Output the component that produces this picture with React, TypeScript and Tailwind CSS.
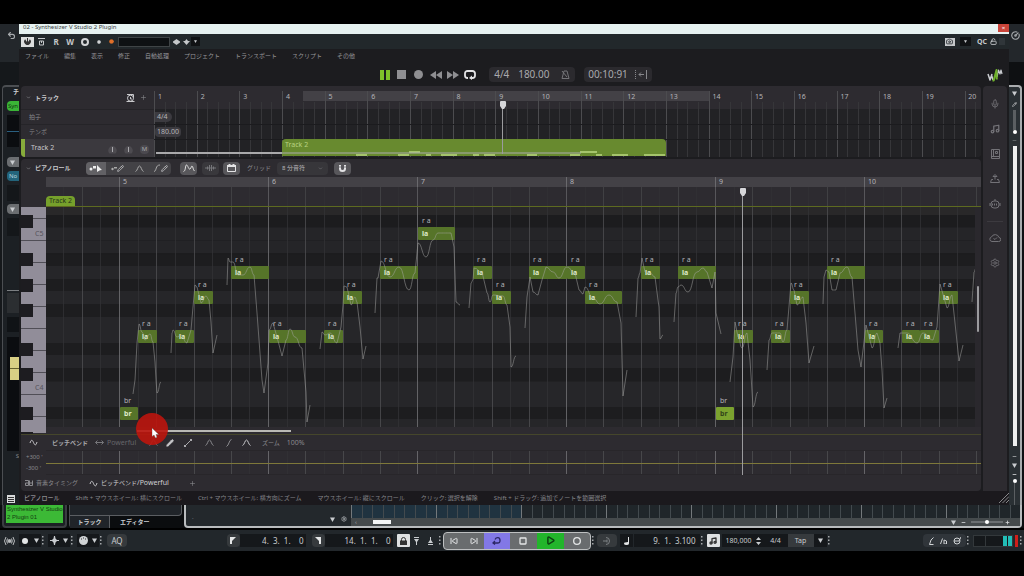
import type { ReactNode } from "react";
import {
  Calendar,
  Camera,
  ChevronDown,
  Circle,
  CircleGauge,
  Mic,
  Minus,
  Music,
  Pencil,
  Play,
  Plus,
  Settings,
  SkipBack,
  SkipForward,
  Square,
  Undo2,
  Unlock,
} from "lucide-react";
import { clsx } from "clsx";

const BAR = 149;
const ROW = 12.8;
const BAR5_X = 74;
const BLACK_KEYS = [1, 3, 6, 8, 10];

type Note = { start: number; len: number; pitch: number; lyric: string; phoneme: string; active?: boolean };

const la = (start: number, len: number, pitch: number): Note => ({ start, len, pitch, lyric: "la", phoneme: "r a" });

// start and length in eighths from bar 5, pitch in semitones from C4
const notes: Note[] = [
  { start: 0, len: 1, pitch: -2, lyric: "br", phoneme: "br" },
  la(1, 1, 4),
  la(3, 1, 4),
  la(4, 1, 7),
  la(6, 2, 9),
  la(8, 2, 4),
  la(11, 1, 4),
  la(12, 1, 7),
  la(14, 2, 9),
  la(16, 2, 12),
  la(19, 1, 9),
  la(20, 1, 7),
  la(22, 2, 9),
  la(24, 1, 9),
  la(25, 2, 7),
  la(28, 1, 9),
  la(30, 2, 9),
  { start: 32, len: 1, pitch: -2, lyric: "br", phoneme: "br", active: true },
  la(33, 1, 4),
  la(35, 1, 4),
  la(36, 1, 7),
  la(38, 2, 9),
  la(40, 1, 4),
  la(42, 1, 4),
  la(43, 1, 4),
  la(44, 1, 7),
];

const pitchCurves: number[][][] = [
  [[87,187],[89,173],[91,136],[93,117],[96,125],[99,133],[104,127],[107,135],[109,155],[110,173],[111,186],[115,175]],
  [[125,146],[126,126],[127,123],[131,130],[135,128],[141,136],[145,123],[147,100],[149,78],[151,80],[155,96],[160,89],[163,93],[165,115],[167,146],[171,128]],
  [[181,78],[182,51],[184,55],[187,55],[192,68],[197,68],[204,60],[208,68],[211,106],[216,173],[218,186],[222,156],[223,123],[227,116],[231,130],[236,149],[240,133],[244,122],[249,130],[256,141],[258,163],[260,185],[261,215],[264,198]],
  [[274,142],[276,125],[279,128],[284,126],[291,136],[295,120],[297,98],[298,79],[301,80],[305,98],[309,90],[311,95],[314,120],[317,152],[320,139]],
  [[329,106],[331,71],[332,71],[335,54],[344,70],[353,60],[363,83],[369,66],[372,36],[380,50],[387,33],[392,26],[405,26],[408,40],[410,95],[414,98]],
  [[423,101],[425,76],[427,73],[428,61],[436,65],[441,86],[444,95],[447,88],[457,89],[461,98],[464,120],[465,160],[470,149]],
  [[479,121],[481,90],[484,70],[487,85],[492,88],[496,73],[500,60],[507,65],[513,71],[521,60],[529,66],[533,83],[537,87],[539,80],[547,91],[554,97],[563,88],[571,95],[575,116],[577,189],[581,163]],
  [[590,110],[592,71],[594,66],[596,51],[599,65],[604,66],[609,70],[612,93],[613,100],[614,132],[617,128]],
  [[628,115],[630,86],[632,80],[635,78],[642,85],[651,65],[657,61],[661,65],[666,81],[669,65],[670,106],[675,127]],
  [[684,175],[687,150],[689,115],[692,130],[696,141],[701,126],[704,153],[707,200],[712,185]],
  [[721,163],[723,133],[726,126],[734,126],[737,135],[741,123],[745,76],[748,83],[751,98],[757,90],[760,116],[763,156],[768,139]],
  [[777,97],[778,70],[780,63],[783,65],[786,83],[790,83],[794,66],[801,60],[806,70],[809,106],[812,143],[815,160],[817,143],[820,118],[826,141],[831,126],[834,136],[836,163],[838,201],[841,191]],
  [[852,141],[854,126],[861,126],[871,136],[877,126],[887,133],[891,120],[894,77],[901,101],[906,88],[909,116],[913,154],[917,138]],
  [[926,95],[928,65],[930,61]],
];

// Horizontal-tangent smoothing keeps the curve from overshooting its points
function smooth(points: number[][]) {
  let d = `M${points[0][0]} ${points[0][1]}`;
  for (let i = 1; i < points.length; i++) {
    const [x, y] = points[i];
    const [px, py] = points[i - 1];
    if (Math.abs(y - py) > 3 * (x - px)) {
      d += `L${x} ${y}`;
    } else {
      const mx = (x + px) / 2;
      d += `C${mx} ${py} ${mx} ${y} ${x} ${y}`;
    }
  }
  return d;
}

const rowTop = (pitch: number) => Math.round(174 - pitch * ROW);
const noteX = (eighth: number) => Math.floor(BAR5_X + (eighth * BAR) / 8);

function BeatGrid({ id, className }: { id: string; className?: string }) {
  return (
    <svg className={clsx("absolute inset-0 h-full w-full", className)} shapeRendering="crispEdges" aria-hidden="true">
      <defs>
        <pattern id={id} x={BAR5_X - 1} y="0" width={BAR} height="40" patternUnits="userSpaceOnUse">
          {[0, 19, 37, 56, 75, 93, 112, 130].map((x, i) => (
            <rect key={x} x={x} width="1" height="40" fill={i === 0 ? "#737376" : i % 2 === 0 ? "#4e4e51" : "#323235"} />
          ))}
        </pattern>
      </defs>
      <rect width="100%" height="100%" fill={`url(#${id})`} />
    </svg>
  );
}

function Tool({ label, className, children }: { label: string; className?: string; children: ReactNode }) {
  return (
    <button type="button" aria-label={label} className={clsx("flex flex-none items-center justify-center", className)}>
      {children}
    </button>
  );
}

function Wave({ className = "text-[#c8c8cb]" }: { className?: string }) {
  return (
    <svg width="9" height="7" viewBox="0 0 9 7" fill="none" stroke="currentColor" className={className}>
      <path d="M1 4C2 1 3 0 4.500 3.500S7 6.500 8 3" />
    </svg>
  );
}

function Arc({ className = "text-[#8b8b8f]" }: { className?: string }) {
  return (
    <svg width="9" height="7" viewBox="0 0 9 7" fill="none" stroke="currentColor" className={className}>
      <path d="M.5 6.500C2.500 6 2.800 1 4.500 1S6.500 6 8.500 6.500" />
    </svg>
  );
}

function Dots() {
  return (
    <svg width="3" height="9" viewBox="0 0 3 9" fill="#a6a9ac" className="flex-none" aria-hidden="true">
      <path d="M1 0h1.500v1.500H1zM1 3.500h1.500V5H1zM1 7h1.500v1.500H1z" />
    </svg>
  );
}

function Caret() {
  return (
    <svg width="5" height="5" viewBox="0 0 5 5" fill="#c9cccf" className="flex-none" aria-hidden="true">
      <path d="M0 .5h5L2.500 5z" />
    </svg>
  );
}

function TitleBar() {
  return (
    <div className="flex h-[10px] items-start justify-between overflow-hidden bg-[#e6f2f1]">
      <span className="pl-1 text-[6px] leading-[6px] text-[#3a4142]">02 - Synthesizer V Studio 2 Plugin</span>
      <button type="button" aria-label="閉じる" className="flex h-2 w-[11px] items-center justify-center bg-[#c9453a] text-[6px] leading-[6px] text-white">
        ×
      </button>
    </div>
  );
}

function PluginToolbar() {
  return (
    <div className="flex h-[15px] items-center bg-[#22282b] pr-1 pl-[2px] text-[8px] font-bold text-[#c5c8ca]">
      <Tool label="電源" className="h-[10px] w-[13px] bg-[#dcdede]">
        <svg width="7" height="7" viewBox="0 0 7 7" fill="#333">
          <path d="M1.200 1.300A3.300 3.300 0 1 0 5.800 1.300L4.500 3.500h-2zM3 0h1v3.500H3z" />
        </svg>
      </Tool>
      <Tool label="バイパス" className="h-[10px] w-[14px]">
        <svg width="7" height="8" viewBox="0 0 7 8" fill="none" stroke="#c5c8ca">
          <path d="M0 .5h7M1.500 3h4v4h-4zM3.500 3v2" />
        </svg>
      </Tool>
      <button type="button" className="ml-[3px] w-[10px] leading-[10px]">R</button>
      <button type="button" className="ml-1 w-[10px] leading-[10px]">W</button>
      <Tool label="比較" className="ml-[6px] w-[8px]">
        <svg width="8" height="8" viewBox="0 0 8 8" fill="none" stroke="#d2d4d6" strokeWidth="2">
          <circle cx="4" cy="4" r="3" />
        </svg>
      </Tool>
      <Tool label="切替" className="ml-[6px] w-[8px]">
        <Circle size={4} fill="#d2d4d6" />
      </Tool>
      <Tool label="プリセット状態" className="ml-1 w-[8px]">
        <Circle size={5} fill="#e0702a" stroke="#e0702a" />
      </Tool>
      <input aria-label="プリセット" className="ml-[3px] h-[10px] w-[52px] border border-[#3f4446] bg-[#0e1113]" />
      <Tool label="前へ" className="ml-[1px] w-[10px]">
        <svg width="7" height="6" viewBox="0 0 7 6" fill="#c5c8ca"><path d="M0 2.500 3.500 0 7 2.500v1L3.500 6 0 3.500z" /></svg>
      </Tool>
      <Tool label="次へ" className="w-[10px]">
        <svg width="7" height="6" viewBox="0 0 7 6" fill="#c5c8ca"><path d="M0 2h2L3.500 0 5 2h2L3.500 6z" /></svg>
      </Tool>
      <Tool label="メニュー" className="h-[9px] w-[9px] bg-[#101214]">
        <svg width="3" height="3" viewBox="0 0 5 5" fill="#c9cccf"><path d="M0 .5h5L2.500 5z" /></svg>
      </Tool>
      <div className="flex-1" />
      <Tool label="スナップショット" className="h-[8px] w-[10px] bg-[#c5c8ca]"><Camera size={7} strokeWidth={3} stroke="#30363a" /></Tool>
      <Tool label="スナップショット一覧" className="ml-[5px] h-[9px] w-[11px] bg-[#101214]">
        <svg width="3" height="3" viewBox="0 0 5 5" fill="#c9cccf"><path d="M0 .5h5L2.500 5z" /></svg>
      </Tool>
      <button type="button" className="ml-[6px] text-[7px] leading-[10px]">QC</button>
      <Tool label="ロック" className="ml-[3px]"><Unlock size={7} strokeWidth={3} /></Tool>
      <div className="ml-[2px] h-[7px] w-[6px] bg-[#30363a]" />
    </div>
  );
}

const menus = ["ファイル", "編集", "表示", "修正", "自動処理", "プロジェクト", "トランスポート", "スクリプト", "その他"];

function MenuBar() {
  return (
    <nav className="flex h-[14px] items-center gap-[15px] pl-[6px] text-[#96969a]">
      {menus.map((m) => (
        <button key={m} type="button">{m}</button>
      ))}
    </nav>
  );
}

function Transport() {
  return (
    <div className="grid h-[23px] grid-cols-[1fr_auto_1fr] items-center text-[10px] text-[#a9a9ad]">
      <div />
      <div className="flex items-center">
        <Tool label="一時停止" className="w-[17px]">
          <svg width="10" height="10" viewBox="0 0 10 10" fill="#7fc02a"><path d="M0 0h4v10H0zM6 0h4v10H6z" /></svg>
        </Tool>
        <Tool label="停止" className="w-[17px]">
          <svg width="9" height="9" viewBox="0 0 9 9" fill="#8f8f92"><path d="M0 0h9v9H0z" /></svg>
        </Tool>
        <Tool label="録音" className="w-[17px]">
          <svg width="9" height="9" viewBox="0 0 9 9" fill="#8f8f92"><circle cx="4.500" cy="4.500" r="4.500" /></svg>
        </Tool>
        <Tool label="巻き戻し" className="w-[17px]">
          <svg width="12" height="8" viewBox="0 0 12 8" fill="#8f8f92"><path d="M6 0v8L0 4zM12 0v8L6 4z" /></svg>
        </Tool>
        <Tool label="早送り" className="w-[17px]">
          <svg width="12" height="8" viewBox="0 0 12 8" fill="#8f8f92"><path d="M0 0v8l6-4zM6 0v8l6-4z" /></svg>
        </Tool>
        <Tool label="ループ" className="w-[17px]">
          <svg width="12" height="10" viewBox="0 0 12 10" fill="none" stroke="#e3e3e5" strokeWidth="1.800">
            <path d="M4 8H3.500a2.500 2.500 0 0 1-2.500-2.500v-2A2.500 2.500 0 0 1 3.500 1h5A2.500 2.500 0 0 1 11 3.500v2A2.500 2.500 0 0 1 8.500 8H7" />
            <path d="M8 5.500 5 8l3 2z" fill="#e3e3e5" stroke="none" />
          </svg>
        </Tool>
        <div className="ml-[11px] flex h-[15px] items-center rounded-sm bg-[#2b2a2e] px-[5px] leading-[15px]">
          <button type="button" className="w-6 text-left">4/4</button>
          <button type="button" className="w-[42px] text-left">180.00</button>
          <Tool label="メトロノーム" className="w-[10px]">
            <svg width="9" height="9" viewBox="0 0 9 9" fill="none" stroke="#747478">
              <path d="M3 1h3l2 7.500H1zM1 1l5 6" />
            </svg>
          </Tool>
        </div>
        <div className="ml-[9px] flex h-[15px] items-center rounded-sm bg-[#2b2a2e] px-1 leading-[15px]">
          <span>00:10:91</span>
          <Tool label="再生追従" className="ml-[7px] w-[13px]">
            <svg width="12" height="9" viewBox="0 0 12 9" fill="none" stroke="#87878b">
              <path d="M.5 0v9" strokeDasharray="1 1" />
              <path d="M9 4.500H4M6 2.500l-2 2 2 2M11.500 0v9" />
            </svg>
          </Tool>
        </div>
      </div>
      <div className="flex justify-end pr-[6px]">
        <svg width="16" height="14" viewBox="0 0 16 14" fill="none" strokeLinejoin="round" aria-hidden="true">
          <path d="M1 6l2 6 2-6M4.500 7l1.500 5" stroke="#c9cccf" strokeWidth="1.500" />
          <path d="m10 9 1.500-7L13 6l1-4 1 4" stroke="#c9cccf" strokeWidth="1.200" />
          <path d="M5.500 12.500h1.200L9.500 2l.3 9.500" stroke="#6fb12c" strokeWidth="2" />
        </svg>
      </div>
    </div>
  );
}

function Playhead({ className }: { className: string }) {
  return (
    <div className={clsx("absolute flex w-[7px] flex-col items-center", className)}>
      <svg width="6" height="8" viewBox="0 0 6 8" fill="#d6d6d9"><path d="M0 1q0-1 1-1h4q1 0 1 1v4L4 8H2L0 5z" /></svg>
      <div className="w-px flex-1 bg-[#9b9b9e]" />
    </div>
  );
}

function Knob({ label }: { label: string }) {
  return (
    <Tool label={label} className="h-[9px] w-[9px]">
      <svg width="9" height="9" viewBox="0 0 9 9">
        <path d="M1.500 8.500a4.300 4.300 0 1 1 6 0z" fill="#4d4b50" />
        <path d="M4.500 2v5" stroke="#a9a9ad" />
      </svg>
    </Tool>
  );
}

function TrackPanel() {
  return (
    <section className="flex overflow-hidden rounded-sm bg-[#2d2b30]">
      <div className="w-[133px] flex-none">
        <div className="flex h-[23px] items-center pl-[5px] font-bold text-[#c9c9cc]">
          <ChevronDown size={5} strokeWidth={4} className="mr-1 text-[#77777b]" />
          <h2 className="flex-1">トラック</h2>
          <Tool label="自動スクロール">
            <svg width="9" height="8" viewBox="0 0 9 8" fill="none" stroke="currentColor">
              <path d="M.5 7.500h8M1 .5h6.500v3M4.500 3v2h1.500" />
              <circle cx="4.500" cy="4.200" r="3" />
            </svg>
          </Tool>
          <Tool label="トラックを追加" className="mr-[7px] ml-[5px]"><Plus size={7} className="text-[#88888c]" /></Tool>
        </div>
        <div className="flex h-[15px] items-center border-t border-[#252428] pl-2 text-[#88888c]">拍子</div>
        <div className="flex h-[15px] items-center border-t border-[#252428] pl-2 text-[#88888c]">テンポ</div>
        <div className="flex h-[18px] items-center border-l-4 border-[#87ac3b] bg-[#3b393e] pl-[6px] text-[#c9c9cc]">
          <span className="flex-1 text-[7px]">Track 2</span>
          <div className="flex gap-[7px] pt-[3px] pr-[5px]">
            <Knob label="音量" />
            <Knob label="パン" />
            <button type="button" className="h-[9px] w-[9px] rounded-sm bg-[#4b494f] text-[6px] leading-[9px] text-[#a9a9ad]">M</button>
          </div>
        </div>
      </div>
      <div className="relative min-w-0 flex-1 overflow-hidden">
        <div className="h-[23px]" />
        <div className="h-[48px] bg-[#222225]" />
        {/* loop range */}
        <div className="absolute top-[5px] left-[149px] h-[10px] w-[406px] bg-[#434146]" />
        <svg className="absolute top-[5px] left-0 h-[66px] w-full" shapeRendering="crispEdges" aria-hidden="true">
          <defs>
            <pattern id="track-bars" width="128" height="66" patternUnits="userSpaceOnUse">
              {[0, 11, 21, 32, 43, 53, 64, 75, 85, 96, 107, 117].map((x, i) => (
                <rect key={x} x={x} y={i % 4 === 0 ? 0 : 11} width="1" height="66" fill={i % 4 === 0 ? "#4c4c4f" : "#363639"} />
              ))}
            </pattern>
          </defs>
          <rect width="100%" height="100%" fill="url(#track-bars)" />
          <path d="M0 33h3000M0 48h3000" stroke="#1b1b1e" />
        </svg>
        <div className="absolute top-[5px] left-0 grid w-[853px] grid-cols-20 text-[7px] leading-[11px] text-[#b4b4b8]">
          {Array.from({ length: 20 }, (_, i) => (
            <span key={i} className="pl-1">{i + 1}</span>
          ))}
        </div>
        <button type="button" className="absolute top-[26px] left-[1px] h-[10px] rounded-r-full bg-[#3c3b40] pr-1 pl-[2px] text-[7px] text-[#b4b4b8]">4/4</button>
        <button type="button" className="absolute top-[41px] left-[1px] h-[10px] rounded-sm bg-[#3c3b40] px-[2px] text-[7px] text-[#b4b4b8]">180.00</button>
        <div className="absolute top-[53px] left-[128px] h-[17px] w-[384px] overflow-hidden rounded-t-sm bg-[#688a2f] pl-[3px] text-[7px] leading-[12px] text-[#b8d282]">
          Track 2
          <svg className="absolute inset-0 h-full w-full" fill="#a5c46b" aria-hidden="true">
            <path d="M127 12h11v2h-11zM298 12h17v2h-17zM74 15h11v2H74zM116 15h11v2h-11zM144 15h5v2h-5zM159 15h16v2h-16zM191 15h6v2h-6zM202 15h11v2h-11zM245 15h10v2h-10zM288 15h10v2h-10zM314 15h6v2h-6zM330 15h16v2h-16zM362 15h21v2h-21z" />
          </svg>
        </div>
        <div className="absolute top-[66px] left-[2px] h-[2px] w-[126px] bg-[#a9a9ab]" />
        <div className="absolute top-[66px] left-[128px] h-[2px] w-[299px] bg-[#a9a9ab]/50" />
        <Playhead className="top-[15px] left-[345px] h-[53px]" />
      </div>
    </section>
  );
}

function RollToolbar() {
  return (
    <div className="flex h-[18px] items-center pl-[5px] text-[#c9c9cc]">
      <ChevronDown size={5} strokeWidth={4} className="mr-1 text-[#77777b]" />
      <h2 className="w-[51px] font-bold">ピアノロール</h2>
      <div className="flex h-[13px] overflow-hidden rounded-sm bg-[#434246]">
        <Tool label="選択ツール" className="w-5 bg-[#626165]">
          <svg width="14" height="9" viewBox="0 0 14 9" fill="#eee"><circle cx="2" cy="5" r="1.500" /><path d="M4 2h3v2.500H4zM8 1l5 5-2 .3L8 8z" /></svg>
        </Tool>
        <Tool label="鉛筆ツール" className="w-[22px]">
          <svg width="6" height="6" viewBox="0 0 6 6" fill="#aaa"><circle cx="1.500" cy="4" r="1.200" /><path d="M3 2h3v1.500H3z" /></svg>
          <Pencil size={7} strokeWidth={3} className="text-[#b9b9bc]" />
        </Tool>
        <Tool label="ピッチ曲線" className="w-[22px]"><Arc className="text-[#aaa]" /></Tool>
        <Tool label="ピッチ描画" className="w-[21px]">
          <svg width="7" height="8" viewBox="0 0 7 8" fill="none" stroke="#aaa"><path d="M0 7.500C3 7 1 1 6 1" /></svg>
          <Pencil size={7} strokeWidth={3} className="text-[#b9b9bc]" />
        </Tool>
      </div>
      <Tool label="ピッチ表示" className="ml-[9px] h-[13px] w-[17px] rounded-sm bg-[#58575b]">
        <svg width="12" height="8" viewBox="0 0 12 8" fill="none" stroke="#ddd"><path d="M.5 7.500C3 7 2 1 3.500 1S5.500 6 7 5s1-3 2-3 1 4 2.500 5" /></svg>
      </Tool>
      <Tool label="波形表示" className="ml-[5px] h-[13px] w-[17px] rounded-sm bg-[#39383c]">
        <svg width="11" height="8" viewBox="0 0 11 8" stroke="#77777b"><path d="M0 4h11M2.500 2.500v3M4.500 1v6M6.500 1v6M8.500 2.500v3" /></svg>
      </Tool>
      <Tool label="小節表示" className="ml-1 h-[13px] w-[17px] rounded-sm bg-[#58575b]">
        <svg width="9" height="8" viewBox="0 0 9 8" fill="none" stroke="#e3e3e5"><path d="M.5 1.500h8v6h-8z" /><path d="M0 2h9M2.500 0v2M6.500 0v2" strokeWidth="2" /></svg>
      </Tool>
      <label htmlFor="grid" className="ml-[7px] w-[30px] text-[#8a8a8e]">グリッド</label>
      <div className="relative">
        <select id="grid" className="h-[13px] w-[51px] appearance-none rounded-sm bg-[#37363a] pl-[5px] text-[#b9b9bc]">
          <option>8 分音符</option>
        </select>
        <ChevronDown size={5} strokeWidth={3} className="pointer-events-none absolute top-1 right-[5px] text-[#77777b]" />
      </div>
      <Tool label="スナップ" className="ml-[6px] h-[13px] w-[17px] rounded-sm bg-[#58575b]">
        <svg width="7" height="7" viewBox="0 0 7 7" fill="none" stroke="#e3e3e5" strokeWidth="2"><path d="M1 0v3.500a2.500 2.500 0 0 0 5 0V0" /><path d="M0 2h7" stroke="#58575b" strokeWidth=".7" /></svg>
      </Tool>
    </div>
  );
}

function PianoKeys() {
  return (
    <svg className="block h-[227px] w-[25px] flex-none" shapeRendering="crispEdges" role="img" aria-label="鍵盤">
      <rect width="25" height="226" fill="#918d99" />
      {[11, 33, 55, 77, 99, 121, 143, 165, 187, 209].map((y) => (
        <rect key={y} y={y} width="25" height="1" fill="#504e56" />
      ))}
      {[13, 10, 8, 6, 3, 1, -2, -4].map((p) => (
        <rect key={p} y={rowTop(p)} width="12" height="13" fill="#1d1c20" />
      ))}
      <text x="14" y="29" fontSize="7" fill="#56535c">C5</text>
      <text x="14" y="183" fontSize="7" fill="#56535c">C4</text>
    </svg>
  );
}

function NoteRoll() {
  return (
    <div className="relative h-[220px] overflow-hidden bg-[#262629]">
      <svg className="absolute inset-0 h-full w-full" shapeRendering="crispEdges" aria-hidden="true">
        {Array.from({ length: 19 }, (_, i) => 14 - i).map((p) => (
          <rect
            key={p}
            y={rowTop(p)}
            width="100%"
            height="13"
            fill={BLACK_KEYS.includes((p + 12) % 12) ? "#1d1d1f" : "#262629"}
          />
        ))}
        <rect width="100%" height="8" fill="#2a292a" />
        <path d="M0 20h3000M0 33h3000M0 174h3000" stroke="#212123" />
      </svg>
      <BeatGrid id="roll-beats" className="opacity-80" />
      {notes.map((n) => (
        <div
          key={n.start}
          className="absolute"
          style={{ left: noteX(n.start), top: rowTop(n.pitch) - 12, width: noteX(n.start + n.len) - noteX(n.start) }}
        >
          <div className="h-3 pl-1 text-[7px] leading-[12px] text-[#b4b4b8]">{n.phoneme}</div>
          <div
            className={clsx(
              "h-[13px] rounded-[1px] pl-1 text-[7px] font-bold leading-[13px]",
              n.active ? "bg-[#7ba22f] text-[#33451a]" : "bg-[#567429] text-[#dfeac9]"
            )}
          >
            {n.lyric}
          </div>
        </div>
      ))}
      <svg className="absolute inset-0 h-full w-full" fill="none" stroke="#a8a8a6" strokeOpacity="0.500" aria-hidden="true">
        {pitchCurves.map((c) => (
          <path key={c[0][0]} d={smooth(c)} />
        ))}
      </svg>
    </div>
  );
}

function PianoRollPanel() {
  return (
    <section className="relative mt-[2px] overflow-hidden rounded-sm bg-[#2d2b30]">
      <RollToolbar />
      <div className="flex">
        <div className="w-[25px] flex-none" />
        <div className="relative min-w-0 flex-1 overflow-hidden">
          <div className="flex h-[10px] bg-[#434146] pl-[73px] text-[7px] leading-[10px] text-[#b4b4b8]">
            {[5, 6, 7, 8, 9, 10].map((bar) => (
              <span key={bar} className="w-[149px] flex-none border-l border-[#6a696d] pl-[3px]">{bar}</span>
            ))}
          </div>
          <div className="relative flex h-5 items-end border-b border-[#5d6a20]">
            <BeatGrid id="section-beats" className="opacity-60" />
            <span className="relative h-[10px] w-[29px] rounded-t-sm bg-[#76a02b] text-center text-[7px] leading-[10px] text-[#26351a]">Track 2</span>
          </div>
        </div>
      </div>
      <div className="flex">
        <PianoKeys />
        <div className="min-w-0 flex-1">
          <div className="flex">
            <div className="min-w-0 flex-1"><NoteRoll /></div>
            <div className="w-[6px] flex-none bg-[#2a282d] pt-[79px]"><div className="mx-auto h-[46px] w-[2px] rounded-full bg-[#9b9b9e]" /></div>
          </div>
          <div className="h-[7px] pt-[3px] pl-[91px]"><div className="h-[2px] w-[154px] bg-[#b9b9b4]" /></div>
        </div>
      </div>
      <div className="flex h-4 items-center border-t border-[#45462b] pl-2 text-[#8a8a8e]">
        <Wave />
        <span className="ml-[14px] w-[41px] font-bold text-[#a9a9ad]">ピッチベンド</span>
        <svg width="9" height="5" viewBox="0 0 9 5" fill="none" stroke="#77777b" className="ml-[2px]" aria-hidden="true">
          <path d="M.5 2.500h8M2.500.5l-2 2 2 2M6.500.5l2 2-2 2" />
        </svg>
        <button type="button" className="ml-[3px] w-[41px] text-left text-[7px] text-[#66666a]">Powerful</button>
        <Tool label="曲線" className="w-[11px]"><Arc className="text-[#77777b]" /></Tool>
        <Tool label="鉛筆" className="ml-[5px] w-[11px]"><Pencil size={8} fill="#c9c9cc" className="text-[#c9c9cc]" /></Tool>
        <Tool label="直線" className="ml-[7px] w-[11px]">
          <svg width="8" height="8" viewBox="0 0 8 8" fill="#a9a9ad" stroke="#a9a9ad"><path d="m1 7 6-6" /><path d="M0 6h2v2H0zM6 0h2v2H6z" stroke="none" /></svg>
        </Tool>
        <Tool label="凸" className="ml-[11px] w-[11px]"><Arc /></Tool>
        <Tool label="斜線" className="ml-2 w-[11px]">
          <svg width="6" height="8" viewBox="0 0 6 8" fill="none" stroke="#8b8b8f"><path d="M.5 7.500 2 6l2-4.500L5.500.5" /></svg>
        </Tool>
        <Tool label="山" className="ml-[7px] w-[11px]"><Arc className="text-[#c9c9cc]" /></Tool>
        <span className="ml-[10px]">ズーム</span>
        <button type="button" className="ml-[7px] text-[7px]">100%</button>
      </div>
      <div className="flex h-[25px]">
        <div className="flex w-[25px] flex-none flex-col justify-center gap-[3px] pl-[5px] leading-[8px] text-[#8a8a8e]">
          <span>+300 '</span>
          <span>-300 '</span>
        </div>
        <div className="relative flex-1 border-y border-[#28262a]">
          <BeatGrid id="param-beats" className="opacity-80" />
          <div className="absolute top-3 h-px w-full bg-[#7e783a]" />
        </div>
      </div>
      <div className="flex h-4 items-center pl-1 text-[#8a8a8e]">
        <button type="button" className="flex items-center gap-[3px]">
          <svg width="8" height="6" viewBox="0 0 8 6" fill="none" stroke="currentColor"><path d="M0 .5h3.500v5h-3v-2.500h3M4.500.5v5h3V3h-3M7.500.5V3" /></svg>
          音素タイミング
        </button>
        <button type="button" className="ml-[11px] flex items-center gap-[3px] text-[#d0d0d3]">
          <Wave />
          <span>ピッチベンド<span className="text-[7px]">/Powerful</span></span>
        </button>
        <Tool label="パラメータを追加" className="ml-5"><Plus size={7} /></Tool>
      </div>
      <Playhead className="top-[29px] left-[718px] h-[287px]" />
      {/* click indicator and mouse pointer */}
      <div className="absolute top-[254px] left-[115px] h-8 w-8 rounded-full bg-[#bd150d]/90">
        <svg width="9" height="12" viewBox="0 0 9 12" className="absolute top-[15px] left-[16px]" aria-hidden="true">
          <path d="M0 0v8.500l2-1.500L3.500 10 5 9.300 4 6.500h2.800z" fill="#fff" stroke="#555" strokeWidth=".4" />
        </svg>
      </div>
    </section>
  );
}

const hints = [
  "Shift + マウスホイール: 横にスクロール",
  "Ctrl + マウスホイール: 横方向にズーム",
  "マウスホイール: 縦にスクロール",
  "クリック: 選択を解除",
  "Shift + ドラッグ: 追加でノートを範囲選択",
];

function Sidebar() {
  const icon = "h-[25px] w-full";
  return (
    <aside className="ml-[2px] flex w-6 flex-none flex-col items-center rounded-t-sm bg-[#2d2b30] pt-[5px] text-[#737277]">
      <Tool label="ボイス" className={icon}><Mic size={10} /></Tool>
      <Tool label="ノート" className={icon}><Music size={10} strokeWidth={3} /></Tool>
      <Tool label="辞書" className={icon}>
        <svg width="9" height="10" viewBox="0 0 9 10" fill="none" stroke="currentColor">
          <path d="M.5.5h8v9h-8zM.5 7.500h8M2.500.5v7M4.500 2.500h2v2h-2z" />
        </svg>
      </Tool>
      <Tool label="書き出し" className={icon}>
        <svg width="10" height="9" viewBox="0 0 10 9" fill="none" stroke="currentColor" strokeLinejoin="round">
          <path d="M5 .5 3 2.500h4zM5 2.500V5.500M3 5.500H1.500L.5 8.500h9l-1-3H7" />
        </svg>
      </Tool>
      <Tool label="AI リテイク" className={icon}>
        <svg width="12" height="10" viewBox="0 0 12 10" fill="none" stroke="currentColor">
          <path d="M6 0v2M1 4v3M11 4v3M3.500 4.500v2M5.500 4.500v2M7.500 4.500v2" />
          <rect x="2" y="2" width="8" height="7" rx="3" />
        </svg>
      </Tool>
      <div className="mt-[5px] mb-[3px] h-px w-4 bg-[#3c3a3f]" />
      <Tool label="クラウド" className={icon}>
        <svg width="12" height="9" viewBox="0 0 12 9" fill="none" stroke="currentColor">
          <path d="M3 8.500h6.500a2 2 0 0 0 .5-4A4 4 0 0 0 2.500 4 2.300 2.300 0 0 0 3 8.500zM4.500 5.500 6 6.500l2-2" />
        </svg>
      </Tool>
      <Tool label="設定" className={icon}><Settings size={10} /></Tool>
    </aside>
  );
}

function PluginWindow() {
  return (
    <main className="flex min-w-0 flex-1 flex-col bg-[#1c1c1f]">
      <TitleBar />
      <PluginToolbar />
      <MenuBar />
      <Transport />
      <div className="flex px-[2px]">
        <div className="min-w-0 flex-1">
          <TrackPanel />
          <PianoRollPanel />
        </div>
        <Sidebar />
      </div>
      <footer className="flex h-[14px] items-center gap-4 bg-[#1b191d] pl-[5px] whitespace-nowrap text-[#85858a]">
        <span className="text-[#b4b4b8]">ピアノロール</span>
        {hints.map((h) => (
          <span key={h}>{h}</span>
        ))}
        <svg width="10" height="10" viewBox="0 0 10 10" stroke="#87878a" className="ml-auto" aria-hidden="true">
          <path d="M0 10 10 0M3.500 10 10 3.500M7 10l3-3" />
        </svg>
      </footer>
    </main>
  );
}

function HostLeft() {
  return (
    <div className="flex w-[19px] flex-none flex-col overflow-hidden bg-[#15181b]">
      <div className="flex h-[38px] justify-center bg-[#23272b] pt-[6px] pl-[3px]">
        <Tool label="元に戻す" className="h-[10px] w-[10px]"><Undo2 size={9} strokeWidth={3} className="text-[#a6a9ac]" /></Tool>
      </div>
      <div className="mt-[23px] ml-[2px] flex flex-1 flex-col rounded-tl border-t-2 border-l border-[#4b4e52] bg-[#1c2024] pl-1">
        <span className="h-[14px] pl-[6px] text-[6px] leading-[10px] font-bold text-[#d0d3d5]">チ</span>
        <div className="h-[10px] rounded-l-sm bg-[#3ab436] pl-px text-[6px] leading-[10px] text-[#123311]">Syn</div>
        <div className="mt-1 flex h-8 items-center bg-[#0b0d10]"><div className="h-px w-full bg-[#2a5f80]" /></div>
        <div className="mt-[10px] flex h-[10px] items-center rounded-l-sm bg-[#6b6e71] pl-[3px]"><Caret /></div>
        <div className="mt-1 h-[10px] rounded-l-sm bg-[#23647b] pl-[2px] text-[6px] leading-[10px] text-[#b8d4de]">No</div>
        <div className="mt-1 h-4 bg-[#14171a]" />
        <div className="mt-[3px] flex h-[10px] items-center rounded-l-sm bg-[#6b6e71] pl-[3px]"><Caret /></div>
        <div className="mt-1 h-[18px] bg-[#14171a]" />
        <div className="mt-[54px] h-px bg-[#7b7e81]" />
        <div className="mt-[2px] h-5 bg-[#2b2e31]" />
        <div className="mt-1 h-[15px] bg-[#101316]" />
        <div className="mt-[5px] flex h-[114px] flex-col bg-[#0b0d10] pt-[20px] pl-[3px]">
          <div className="flex h-[23px] w-[9px] items-center bg-[#d8cf84]"><div className="h-px w-full bg-[#65602f]" /></div>
        </div>
        <span className="text-right text-[6px] leading-[10px] text-[#85888b]">S</span>
        <Tool label="チャンネル" className="mt-auto mb-[2px] h-2 w-2 bg-[#d8dadb]">
          <svg width="6" height="6" viewBox="0 0 6 6" stroke="#333"><path d="M0 1.500h6M0 3.500h6M0 5.500h6" /></svg>
        </Tool>
      </div>
    </div>
  );
}

function HostRight() {
  return (
    <div className="flex w-[15px] flex-none flex-col bg-[#0e1012]">
      <div className="flex h-[38px] bg-[#23272b] pt-[6px] pl-[1px]">
        <Tool label="設定" className="h-[10px] w-[10px]"><CircleGauge size={9} strokeWidth={3} className="text-[#a6a9ac]" /></Tool>
      </div>
      <div className="mt-[23px] mr-[2px] flex flex-1 flex-col items-center rounded-tr border-t-2 border-r-2 border-[#a9acae] bg-[#2a3034] pt-1">
        <Caret />
        <Pencil size={5} strokeWidth={4} className="mt-[6px] text-[#a6a9ac]" />
        <div className="mt-[3px] h-5 w-[3px] bg-[#5b5f62]" />
        <div className="h-1 w-1 rounded-full bg-white" />
        <Minus size={5} className="mt-1 text-[#a6a9ac]" />
        <div className="mt-[3px] w-1 flex-1 bg-[#eef0f0]" />
        <Minus size={5} strokeWidth={4} className="mt-2 text-[#a6a9ac]" />
        <span className="mt-1"><Caret /></span>
        <Minus size={5} strokeWidth={4} className="mt-1 text-[#d0d3d5]" />
        <div className="mt-[2px] h-1 w-1 rounded-full bg-white" />
        <div className="h-[22px] w-px bg-[#5b5f62]" />
      </div>
    </div>
  );
}

function HostLower() {
  return (
    <div className="flex h-[23px] bg-[#0b0d0f]">
      <div className="ml-[2px] w-[65px] flex-none rounded-b border-x-2 border-b-2 border-[#3a3d41] bg-[#1c2024] px-[2px] pb-[3px]">
        <div className="h-[18px] bg-[#3cb936] pl-px font-['Liberation_Sans',sans-serif] text-[6px] leading-[8px] whitespace-nowrap text-[#143d12]">
          Synthesizer V Studio
          <br />2 Plugin 01
        </div>
      </div>
      <div className="ml-[2px] w-[113px] flex-none rounded-b border-l border-[#4b4e52]">
        <div className="h-[11px] rounded-br border-r border-b border-[#5b5e62] bg-[#202429]" />
        <div className="flex text-[6px] leading-[12px] font-bold text-[#c9cccf]">
          <button type="button" className="w-10 border-r border-[#5b5e62] bg-[#202429]">トラック</button>
          <button type="button" className="pl-[10px]">エディター</button>
        </div>
      </div>
      <div className="mr-[2px] ml-[2px] flex min-w-0 flex-1 rounded-b border-x-2 border-b-2 border-[#b9bcbe] bg-[#23282c]">
        <div className="flex w-[165px] flex-none items-end gap-[6px] pr-1 pb-1 pl-[6px]">
          <span className="mr-auto leading-[8px] text-[#a6a9ac]">·</span>
          <Caret />
          <Tool label="表示設定"><Settings size={6} strokeWidth={3} className="text-[#a6a9ac]" /></Tool>
        </div>
        <div className="flex min-w-0 flex-1 flex-col">
          <div className="relative h-[13px] bg-[#20262a]">
            <div className="h-full w-[170px] bg-[#203340]" />
            <svg className="absolute inset-0 h-full w-full" shapeRendering="crispEdges" aria-hidden="true">
              <defs>
                <pattern id="host-bars" width="85" height="13" patternUnits="userSpaceOnUse">
                  {[0, 11, 21, 32, 43, 53, 64, 75].map((x, i) => (
                    <rect key={x} x={x} width="1" height="13" fill={i === 0 ? "#73787b" : "#434a4e"} />
                  ))}
                </pattern>
              </defs>
              <rect width="100%" height="100%" fill="url(#host-bars)" />
            </svg>
          </div>
          <div className="flex flex-1 items-center bg-[#454a4c] pr-[10px] pl-1">
            <span className="w-[18px] leading-[6px] text-[#a6a9ac]">‹</span>
            <div className="h-1 w-[18px] bg-[#f3f5f5]" />
            <div className="flex-1" />
            <Caret />
            <Minus size={5} strokeWidth={4} className="mx-[5px] text-[#d0d3d5]" />
            <input type="range" aria-label="横ズーム" className="h-[2px] w-8 appearance-none bg-[#6b6f72] [&::-webkit-slider-thumb]:h-1 [&::-webkit-slider-thumb]:w-1 [&::-webkit-slider-thumb]:appearance-none [&::-webkit-slider-thumb]:rounded-full [&::-webkit-slider-thumb]:bg-white" />
            <Plus size={5} strokeWidth={4} className="ml-[2px] text-[#d0d3d5]" />
          </div>
        </div>
      </div>
    </div>
  );
}

function Field({ label, value, className }: { label: string; value: string; className: string }) {
  return (
    <input
      aria-label={label}
      defaultValue={value}
      className={clsx("h-[13px] min-w-0 flex-none bg-[#15181b] whitespace-pre text-[#c9cccf]", className)}
    />
  );
}

function HostTransport() {
  const dark = "h-[13px] bg-[#15181b]";
  const key = "h-full w-[20px]";
  return (
    <div className="mt-[2px] flex h-[21px] items-center bg-[#22272b] text-[8px] text-[#c9cccf]">
      <Tool label="オーディオ接続" className="ml-[3px] w-3">
        <svg width="11" height="8" viewBox="0 0 11 8" fill="none" stroke="#b9bcbe"><path d="M2 0Q-1 4 2 8M9 0q3 4 0 8M3.500 1.500q-1.500 2.500 0 5M7.500 1.500q1.500 2.500 0 5" /><circle cx="5.500" cy="4" r="1.500" fill="#b9bcbe" /></svg>
      </Tool>
      <Tool label="録音モード" className={clsx(dark, "ml-1 w-[22px] gap-[6px]")}>
        <svg width="6" height="6" viewBox="0 0 6 6" fill="#e3e5e6"><circle cx="3" cy="3" r="3" /></svg>
        <Caret />
      </Tool>
      <Dots />
      <Tool label="オーディオ録音" className={clsx(dark, "ml-1 w-[22px] gap-1")}>
        <svg width="9" height="9" viewBox="0 0 9 9" fill="#c9cccf"><path d="M0 4h2l1.500-1.500L4 0h1l.5 2.500L7 4h2v1H7L5.500 6.500 5 9H4l-.5-2.500L2 5H0z" /></svg>
        <Caret />
      </Tool>
      <Dots />
      <Tool label="MIDI 録音" className={clsx(dark, "ml-1 w-[22px] gap-1")}>
        <svg width="9" height="9" viewBox="0 0 9 9"><circle cx="4.500" cy="4.500" r="4.500" fill="#d0d3d5" /><path d="M2 3h1M4 2h1M6 3h1" stroke="#333" /></svg>
        <Caret />
      </Tool>
      <Dots />
      <button type="button" className="mr-[6px] ml-[5px] h-[13px] w-5 rounded-sm bg-[#363a3d] leading-[13px]">AQ</button>
      <div className="flex-1" />
      <Tool label="左ロケーター" className="h-[13px] w-[13px] rounded-sm bg-[#363a3d]">
        <svg width="6" height="7" viewBox="0 0 6 7" fill="#e3e5e6"><path d="M0 0h6L2 4v3H0z" /></svg>
      </Tool>
      <Field label="左ロケーター位置" value="4.  3.  1.    0" className="w-[66px] pr-[2px] text-right" />
      <Tool label="右ロケーター" className="ml-[6px] h-[13px] w-[13px] rounded-sm bg-[#363a3d]">
        <svg width="6" height="7" viewBox="0 0 6 7" fill="#e3e5e6"><path d="M6 0H0l4 4v3h2z" /></svg>
      </Tool>
      <Field label="右ロケーター位置" value="14.  1.  1.    0" className="w-[68px] pr-[2px] text-right" />
      <Tool label="ロケーターをロック" className="ml-1 h-[13px] w-[13px] rounded-[1px] bg-[#dfe1e2]">
        <svg width="7" height="8" viewBox="0 0 7 8" fill="#333"><path d="M0 3.500h7V8H0z" /><path d="M1.500 4V2.500a2 2 0 0 1 4 0V4" fill="none" stroke="#333" /></svg>
      </Tool>
      <Tool label="パンチイン" className="w-[14px]">
        <svg width="5" height="8" viewBox="0 0 5 8" fill="#c9cccf"><path d="M0 0h5v1H0zM0 2h5L3 5v3H2V5z" /></svg>
      </Tool>
      <Tool label="パンチアウト" className="w-[14px]">
        <svg width="5" height="8" viewBox="0 0 5 8" fill="#c9cccf"><path d="M2 0h1v3l2 3H0l2-3zM0 7h5v1H0z" /></svg>
      </Tool>
      <Dots />
      <div className="ml-[2px] flex h-[18px] overflow-hidden rounded-sm border border-[#bdbfc0] bg-[#696c6e] text-[#e3e5e6]">
        <Tool label="先頭へ" className={key}><SkipBack size={8} strokeWidth={3} /></Tool>
        <Tool label="末尾へ" className={key}><SkipForward size={8} strokeWidth={3} /></Tool>
        <Tool label="サイクル" className="h-full w-[26px] bg-[#8278e6]">
          <svg width="9" height="8" viewBox="0 0 9 8" fill="none" stroke="#2c2766" strokeWidth="1.300"><path d="M3 2.500Q4 .5 6 .7T8 3.500 5.500 6H1M3 4 1 6l2 1.500" /></svg>
        </Tool>
        <Tool label="停止" className="h-full w-[27px]"><Square size={8} strokeWidth={4} /></Tool>
        <Tool label="再生" className="h-full w-[27px] bg-[#22b52b]"><Play size={9} strokeWidth={4} className="text-[#0e4212]" /></Tool>
        <Tool label="録音" className="h-full w-[26px]"><Circle size={8} strokeWidth={4} /></Tool>
      </div>
      <Dots />
      <Tool label="プリロール" className="ml-[3px] h-[13px] w-5 rounded-sm bg-[#363a3d]">
        <svg width="8" height="8" viewBox="0 0 8 8" fill="none" stroke="#7d8184"><path d="M3 .5a3.500 3.500 0 0 1 0 7M0 4h4M4 2.500v3" /></svg>
      </Tool>
      <Tool label="時間形式" className={clsx(dark, "ml-[3px] w-[13px]")}>
        <svg width="5" height="8" viewBox="0 0 5 8" fill="#e3e5e6"><path d="M4 0h1v6.500Q5 8 2.500 8T0 6.500 4 5z" /></svg>
      </Tool>
      <Field label="現在位置" value="9.  1.  3.100" className="ml-px w-[66px] pr-1 text-right" />
      <Dots />
      <Tool label="テンポトラック" className="ml-1 h-[13px] w-[13px] rounded-[1px] bg-[#dfe1e2]"><Music size={8} strokeWidth={4} className="text-[#333]" /></Tool>
      <Field label="テンポ" value="180,000" className="ml-[2px] w-[34px] pl-[4px] text-[7px]" />
      <div className={clsx(dark, "flex w-[8px] items-center")}>
        <svg width="5" height="8" viewBox="0 0 5 8" fill="#c9cccf"><path d="M0 3 2.500 0 5 3zM0 5h5L2.500 8z" /></svg>
      </div>
      <Field label="拍子" value="4/4" className="w-6 text-center text-[7px]" />
      <button type="button" className="h-[13px] w-[26px] bg-[#363a3d] text-[7px] leading-[13px]">Tap</button>
      <Tool label="タップメニュー" className={clsx(dark, "w-[13px]")}><Caret /></Tool>
      <Dots />
      <div className="flex-1" />
      <div className="flex h-[13px] items-center gap-[6px] rounded-sm bg-[#30353a] px-[5px]">
        <svg width="6" height="8" viewBox="0 0 6 8" fill="none" stroke="#d0d3d5"><path d="M5.500.5 3 3 1.500 7.500h4" /></svg>
        <svg width="7" height="6" viewBox="0 0 7 6" fill="none" stroke="#d0d3d5"><path d="M.5 6 2.500.5M4 6V2l2.500 1v3z" /></svg>
        <svg width="8" height="8" viewBox="0 0 8 8" fill="none" stroke="#d0d3d5"><circle cx="4" cy="4" r="3" /><path d="M1 4h5L8 0" /></svg>
      </div>
      <Dots />
      <div className="ml-1 h-3 w-[13px] border border-[#33383b] bg-[#15181b]" />
      <div className="flex h-3 w-[27px] items-center justify-end gap-px border border-l-0 border-[#33383b] bg-[#15181b]">
        <div className="h-[10px] w-1 bg-[#22bdb6]" />
        <div className="h-[10px] w-1 bg-[#22bdb6]" />
      </div>
      <div className="ml-[2px] h-3 w-[3px] bg-[#d01f1a]" />
      <div className="mr-[2px] ml-px"><Dots /></div>
    </div>
  );
}

export default function App() {
  return (
    <div className="flex min-h-screen flex-col bg-black pt-6 font-['Noto_Sans','Noto_Sans_CJK_JP',sans-serif] text-[6px] leading-[10px] text-[#c9c9cc]">
      <div className="flex">
        <HostLeft />
        <PluginWindow />
        <HostRight />
      </div>
      <HostLower />
      <HostTransport />
    </div>
  );
}
